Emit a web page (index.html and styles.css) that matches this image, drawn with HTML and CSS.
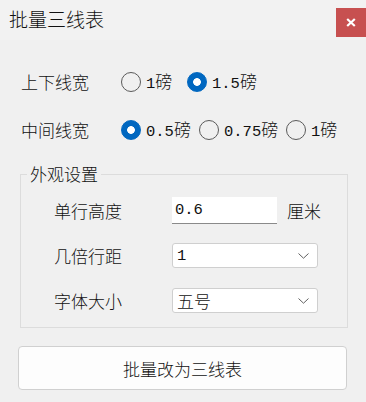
FILE: index.html
```html
<!DOCTYPE html>
<html lang="zh-CN">
<head>
<meta charset="utf-8">
<title>批量三线表</title>
<link rel="stylesheet" href="styles.css">
</head>
<body>
<div class="window">
  <header class="titlebar">
    <span class="title">批量三线表</span>
    <button class="close" aria-label="关闭"><svg width="10" height="9" viewBox="0 0 10 9"><path d="M1.2 1 L8.8 8 M8.8 1 L1.2 8" stroke="#fff" stroke-width="2.2" fill="none"/></svg></button>
  </header>
  <main class="content">
    <div class="row">
      <span class="label">上下线宽</span>
      <label class="opt w66"><input type="radio" name="outer"><span><span class="num">1</span>磅</span></label>
      <label class="opt"><input type="radio" name="outer" checked><span><span class="num">1.5</span>磅</span></label>
    </div>
    <div class="row">
      <span class="label">中间线宽</span>
      <label class="opt w78"><input type="radio" name="inner" checked><span><span class="num">0.5</span>磅</span></label>
      <label class="opt w87"><input type="radio" name="inner"><span><span class="num">0.75</span>磅</span></label>
      <label class="opt"><input type="radio" name="inner"><span><span class="num">1</span>磅</span></label>
    </div>
    <fieldset class="group">
      <legend>外观设置</legend>
      <div class="group-body">
        <div class="frow frow-a">
          <span class="flabel">单行高度</span>
          <input class="text-input" type="text" value="0.6">
          <span class="unit">厘米</span>
        </div>
        <div class="frow frow-b">
          <span class="flabel">几倍行距</span>
          <div class="select"><span class="num">1</span><svg class="chev" width="11" height="6" viewBox="0 0 11 6"><path d="M0.5 0.5 L5.5 5.2 L10.5 0.5" stroke="#606060" stroke-width="1" fill="none"/></svg></div>
        </div>
        <div class="frow frow-c">
          <span class="flabel">字体大小</span>
          <div class="select"><span>五号</span><svg class="chev" width="11" height="6" viewBox="0 0 11 6"><path d="M0.5 0.5 L5.5 5.2 L10.5 0.5" stroke="#606060" stroke-width="1" fill="none"/></svg></div>
        </div>
      </div>
    </fieldset>
    <button class="apply">批量改为三线表</button>
  </main>
</div>
</body>
</html>
```
FILE: styles.css
```css
html, body {
  margin: 0;
  padding: 0;
}
body {
  width: 366px;
  height: 402px;
  overflow: hidden;
  background: #f0f0f0;
  font-family: "Noto Sans CJK SC", "Microsoft YaHei", sans-serif;
  font-weight: 300;
  color: #111;
}
.titlebar {
  display: flex;
  justify-content: space-between;
  align-items: flex-start;
  height: 40px;
  background: #f2f2f2;
}
.title {
  font-size: 19px;
  line-height: 20px;
  margin: 9px 0 0 9px;
}
.close {
  margin-top: 8px;
  width: 30px;
  height: 29px;
  border: 0;
  padding: 0;
  background: #c75050;
  display: flex;
  align-items: center;
  justify-content: center;
}
.content {
  padding-top: 28px;
}
.row {
  display: flex;
  align-items: center;
  height: 28px;
  padding-left: 21px;
}
.row + .row {
  margin-top: 20px;
}
.label {
  width: 100px;
  font-size: 17px;
  line-height: 20px;
}
.opt {
  display: flex;
  align-items: center;
  gap: 5px;
  font-size: 17px;
  line-height: 20px;
  color: #111;
}
.w66 { width: 66px; }
.w78 { width: 78px; }
.w87 { width: 87px; }
input[type="radio"] {
  appearance: none;
  -webkit-appearance: none;
  margin: 0;
  width: 20px;
  height: 20px;
  box-sizing: border-box;
  border: 1px solid #5a5a5a;
  border-radius: 50%;
  background: transparent;
  flex: none;
}
input[type="radio"]:checked {
  border-color: #0067c0;
  background: radial-gradient(circle, #fff 0 3.5px, #0067c0 4.2px);
}
.num {
  font-family: "Liberation Mono", monospace;
  font-weight: 400;
  font-size: 15.5px;
}
.group {
  margin: 20px 18px 0 20px;
  padding: 0;
  border: 1px solid #dcdcdc;
  min-width: 0;
}
.group legend {
  margin-left: 6px;
  padding: 0 3px;
  font-size: 17px;
  line-height: 20px;
}
.group-body {
  padding: 13px 0 14px 33px;
}
.frow {
  display: flex;
  align-items: center;
}
.frow-a { height: 27px; }
.frow-b { height: 25px; margin-top: 19px; }
.frow-c { height: 25px; margin-top: 20px; }
.flabel {
  width: 118px;
  font-size: 17px;
  line-height: 20px;
}
.text-input {
  width: 105px;
  height: 27px;
  box-sizing: border-box;
  border: 0;
  border-bottom: 1px solid #8a8a8a;
  background: #fff;
  font-family: "Liberation Mono", monospace;
  font-size: 15.5px;
  color: #111;
  padding: 0 3px;
  margin: 0;
  outline: none;
}
.unit {
  margin-left: 10px;
  font-size: 17px;
  line-height: 20px;
}
.select {
  width: 146px;
  height: 25px;
  box-sizing: border-box;
  border: 1px solid #cfcfcf;
  border-radius: 3px;
  background: #fff;
  display: flex;
  align-items: center;
  justify-content: space-between;
  padding: 0 8px 0 4px;
  font-size: 17px;
  line-height: 20px;
  color: #111;
}
.apply {
  display: block;
  margin: 18px 0 0 18px;
  width: 329px;
  height: 44px;
  box-sizing: border-box;
  border: 1px solid #d0d0d0;
  border-radius: 4px;
  background: #fdfdfd;
  font-family: inherit;
  font-weight: 300;
  font-size: 17px;
  color: #111;
  padding: 0;
}
```
